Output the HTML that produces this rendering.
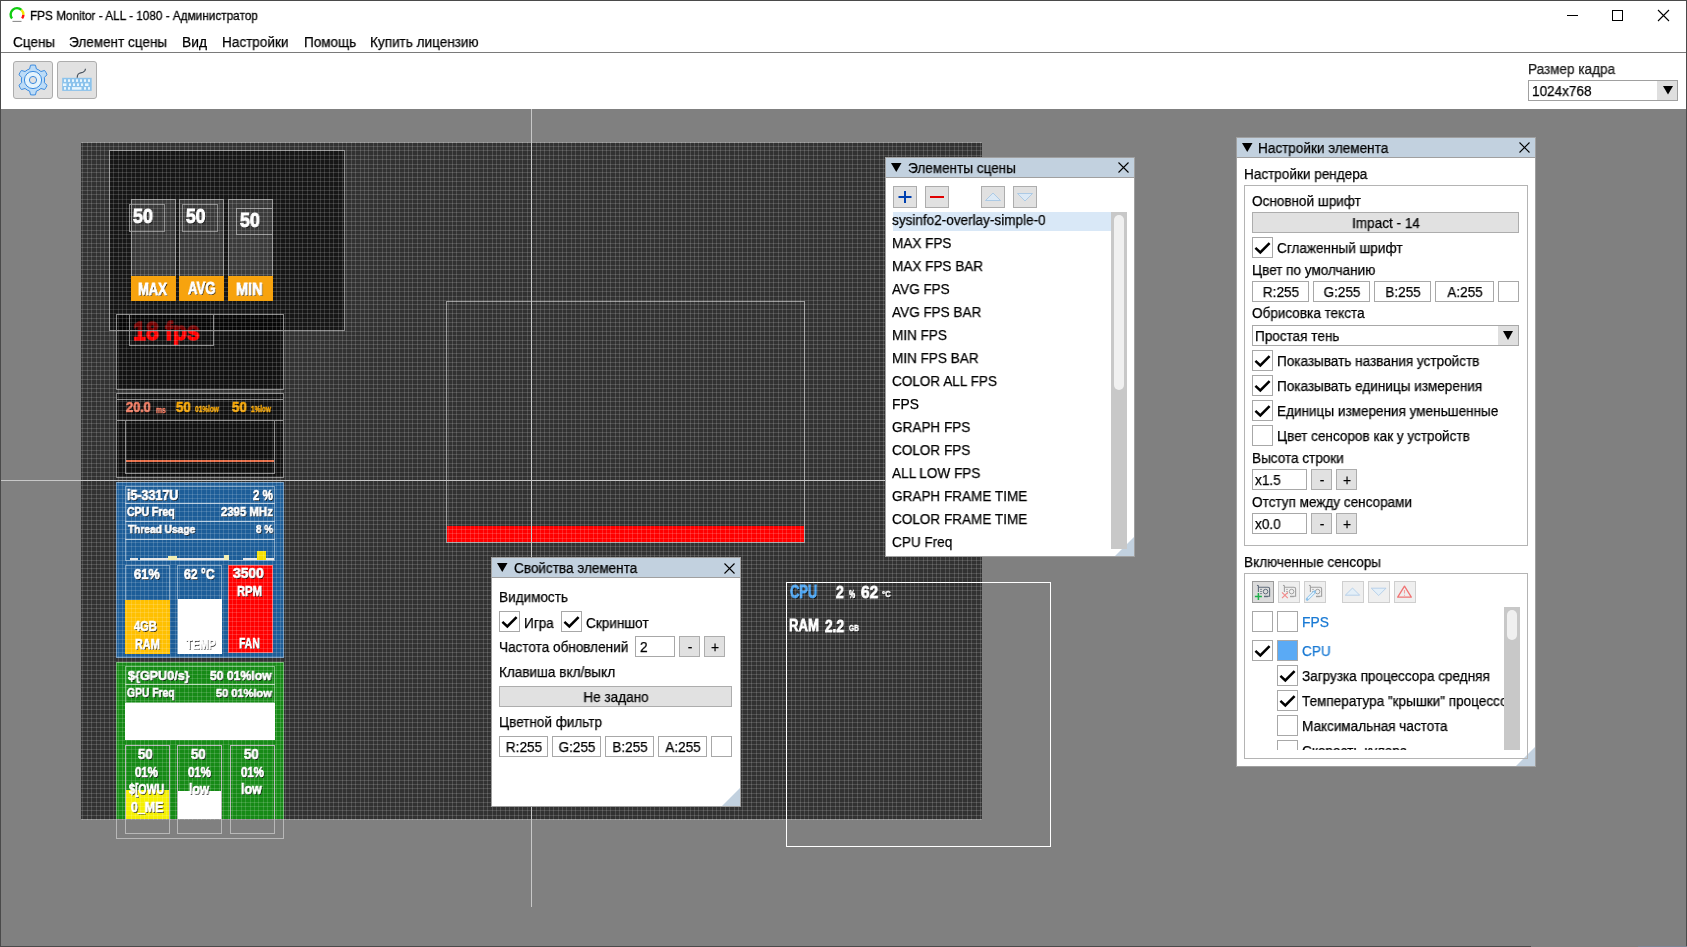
<!DOCTYPE html>
<html><head><meta charset="utf-8"><style>
html,body{margin:0;padding:0;}
body{width:1687px;height:947px;overflow:hidden;position:relative;background:#fff;font-family:"Liberation Sans", sans-serif;color:#000;}
.t{position:absolute;white-space:nowrap;line-height:1;will-change:transform;}
.imp{will-change:transform;}
.imp{font-weight:bold;transform-origin:0 0;-webkit-text-stroke:0.05em currentColor;}
div{box-sizing:border-box;}
svg{position:absolute;overflow:visible;}
</style></head><body>

<div style="position:absolute;left:0px;top:0px;width:1687px;height:109px;background:#fff;"></div>
<div class="t" style="left:30px;top:10.17px;font-size:12.8px;transform-origin:0 0;color:#000;transform:scaleX(0.92);transform-origin:0 0;-webkit-text-stroke:0.3px #000;">FPS Monitor - ALL - 1080 - Администратор</div>
<svg style="left:0px;top:0px" width="30" height="30" viewBox="0 0 30 30">
<path d="M12.03 18.53 A6.4 6.4 0 0 1 21.45 9.9" fill="none" stroke="#10cc10" stroke-width="2.4"/>
<path d="M21.45 9.9 A6.4 6.4 0 0 1 23.39 14.83" fill="none" stroke="#f0e800" stroke-width="2.4"/>
<path d="M23.39 14.83 A6.4 6.4 0 0 1 22.11 18.35" fill="none" stroke="#ff1010" stroke-width="2.4"/>
<rect x="12.5" y="20.9" width="9" height="0.9" fill="#777"/>
</svg>
<div style="position:absolute;left:1567px;top:15px;width:11px;height:1px;background:#000;"></div>
<div style="position:absolute;left:1612px;top:10px;width:11px;height:11px;border:1px solid #000;"></div>
<svg style="left:1657px;top:9px" width="13" height="13" viewBox="0 0 13 13">
<path d="M1 1 L12 12 M12 1 L1 12" stroke="#000" stroke-width="1.1"/></svg>
<div class="t" style="left:12.7px;top:35.92px;font-size:13.8px;transform-origin:0 0;transform:scaleX(0.9820);-webkit-text-stroke:0.25px currentColor;">Сцены</div>
<div class="t" style="left:69.4px;top:35.92px;font-size:13.8px;transform-origin:0 0;transform:scaleX(0.9820);-webkit-text-stroke:0.25px currentColor;">Элемент сцены</div>
<div class="t" style="left:182.39999999999998px;top:35.92px;font-size:13.8px;transform-origin:0 0;transform:scaleX(0.9820);-webkit-text-stroke:0.25px currentColor;">Вид</div>
<div class="t" style="left:222.39999999999998px;top:35.92px;font-size:13.8px;transform-origin:0 0;transform:scaleX(0.9820);-webkit-text-stroke:0.25px currentColor;">Настройки</div>
<div class="t" style="left:303.59999999999997px;top:35.92px;font-size:13.8px;transform-origin:0 0;transform:scaleX(0.9820);-webkit-text-stroke:0.25px currentColor;">Помощь</div>
<div class="t" style="left:370.3px;top:35.92px;font-size:13.8px;transform-origin:0 0;transform:scaleX(0.9820);-webkit-text-stroke:0.25px currentColor;">Купить лицензию</div>
<div style="position:absolute;left:0px;top:52px;width:1687px;height:1px;background:#7a7a7a;"></div>
<div style="position:absolute;left:13px;top:61px;width:40px;height:38px;background:#e1e1e1;border:1px solid #adadad;border-radius:3px;"></div>
<div style="position:absolute;left:57px;top:61px;width:40px;height:38px;background:#e1e1e1;border:1px solid #adadad;border-radius:3px;"></div>
<svg style="left:13px;top:61px" width="40" height="38" viewBox="0 0 40 38">
<path d="M16.61 7.91 L17.52 4.21 A15 15 0 0 1 22.48 4.21 L23.39 7.91 A11.6 11.6 0 0 1 27.91 10.52 L31.57 9.46 A15 15 0 0 1 34.05 13.75 L31.30 16.39 A11.6 11.6 0 0 1 31.30 21.61 L34.05 24.25 A15 15 0 0 1 31.57 28.54 L27.91 27.48 A11.6 11.6 0 0 1 23.39 30.09 L22.48 33.79 A15 15 0 0 1 17.52 33.79 L16.61 30.09 A11.6 11.6 0 0 1 12.09 27.48 L8.43 28.54 A15 15 0 0 1 5.95 24.25 L8.70 21.61 A11.6 11.6 0 0 1 8.70 16.39 L5.95 13.75 A15 15 0 0 1 8.43 9.46 L12.09 10.52 A11.6 11.6 0 0 1 16.61 7.91 Z" fill="#bddcf7" stroke="#3b8be0" stroke-width="1"/>
<circle cx="20" cy="19" r="8.6" fill="#e4f3fc" stroke="#3b8be0" stroke-width="1"/>
<circle cx="20" cy="19" r="3.6" fill="#e1e1e1" stroke="#3b8be0" stroke-width="1"/>
</svg>
<svg style="left:57px;top:61px" width="40" height="38" viewBox="0 0 40 38">
<rect x="5.2" y="16.8" width="29.5" height="13.1" fill="#8cc3ec"/>
<g fill="#e8f7fe"><rect x="7" y="18.3" width="2" height="2.6"/><rect x="11" y="18.3" width="2" height="2.6"/><rect x="15" y="18.3" width="2" height="2.6"/><rect x="19" y="18.3" width="2" height="2.6"/><rect x="23" y="18.3" width="2" height="2.6"/><rect x="27" y="18.3" width="2" height="2.6"/><rect x="31" y="18.3" width="2" height="2.6"/><rect x="6" y="22.4" width="3.5" height="2.6"/><rect x="12" y="22.4" width="2" height="2.6"/><rect x="16" y="22.4" width="2" height="2.6"/><rect x="20" y="22.4" width="2" height="2.6"/><rect x="24" y="22.4" width="2" height="2.6"/><rect x="28" y="22.4" width="3.5" height="2.6"/><rect x="7" y="26.1" width="2" height="2.6"/><rect x="11" y="26.1" width="2" height="2.6"/><rect x="15" y="26.1" width="9.5" height="2.6"/><rect x="27" y="26.1" width="2" height="2.6"/><rect x="31" y="26.1" width="2" height="2.6"/></g>
<path d="M20.2 16.8 C20.2 11 24 12 26 11.2 C28 10.4 28.5 9.5 28.5 7.8" fill="none" stroke="#4a5560" stroke-width="1.2"/>
</svg>
<div class="t" style="left:1527.6000000000001px;top:63.12px;font-size:13.8px;transform-origin:0 0;transform:scaleX(0.9820);-webkit-text-stroke:0.25px currentColor;color:#1a1a1a;">Размер кадра</div>
<div style="position:absolute;left:1528px;top:80px;width:150px;height:21px;background:#fff;border:1px solid #a0a0a0;"></div>
<div style="position:absolute;left:1657px;top:81px;width:20px;height:19px;background:#dfdfdf;"></div>
<div class="t" style="left:1531.9px;top:85.12px;font-size:13.8px;transform-origin:0 0;transform:scaleX(0.9820);-webkit-text-stroke:0.25px currentColor;">1024x768</div>
<svg style="left:1662.5px;top:86px" width="10" height="9"><path d="M0 0 L10 0 L5 8.6 Z" fill="#000"/></svg>
<div style="position:absolute;left:0px;top:109px;width:1687px;height:838px;background:#808080;"></div>
<div style="position:absolute;left:81px;top:143px;width:901px;height:676px;background:#323232;"></div>
<div style="position:absolute;left:116px;top:314px;width:168px;height:76px;background:#111;border:1px solid #8c8c8c;"></div>
<div style="position:absolute;left:129px;top:314px;width:85px;height:32px;border:1px solid #8c8c8c;"></div>
<div class="t imp" style="left:133.19px;top:319.05px;font-size:25.42px;transform:scaleX(0.909);color:#ff0000;">18 fps</div>
<div style="position:absolute;left:109px;top:150px;width:236px;height:181px;background:rgba(0,0,0,.55);border:1px solid #8c8c8c;"></div>
<div style="position:absolute;left:116px;top:314px;width:168px;height:76px;border:1px solid #8c8c8c;"></div>
<div style="position:absolute;left:129px;top:314px;width:85px;height:32px;border:1px solid #8c8c8c;"></div>
<div style="position:absolute;left:131px;top:199px;width:45px;height:102px;background:#3a3a3a;border:1px solid #8c8c8c;"></div>
<div style="position:absolute;left:179px;top:199px;width:45px;height:102px;background:#3a3a3a;border:1px solid #8c8c8c;"></div>
<div style="position:absolute;left:228px;top:199px;width:45px;height:102px;background:#3a3a3a;border:1px solid #8c8c8c;"></div>
<div style="position:absolute;left:129px;top:204px;width:36px;height:28px;border:1px solid #8c8c8c;"></div>
<div style="position:absolute;left:182px;top:204px;width:36px;height:28px;border:1px solid #8c8c8c;"></div>
<div style="position:absolute;left:236px;top:208px;width:37px;height:27px;border:1px solid #8c8c8c;"></div>
<div class="t imp" style="left:132.91px;top:207.35px;font-size:19.33px;transform:scaleX(0.930);color:#fff;text-shadow:1px 1px 0 rgba(0,0,0,.9);">50</div>
<div class="t imp" style="left:186.21px;top:207.35px;font-size:19.33px;transform:scaleX(0.902);color:#fff;text-shadow:1px 1px 0 rgba(0,0,0,.9);">50</div>
<div class="t imp" style="left:240.31px;top:210.95px;font-size:19.33px;transform:scaleX(0.925);color:#fff;text-shadow:1px 1px 0 rgba(0,0,0,.9);">50</div>
<div style="position:absolute;left:116px;top:393px;width:168px;height:85px;background:#111;border:1px solid #8c8c8c;"></div>
<div style="position:absolute;left:116px;top:399px;width:168px;height:22px;border:1px solid #8c8c8c;"></div>
<div style="position:absolute;left:125px;top:420px;width:150px;height:54px;border:1px solid #8c8c8c;"></div>
<div style="position:absolute;left:126px;top:460px;width:148px;height:2px;background:#e8704a;"></div>
<div class="t imp" style="left:125.87px;top:400.02px;font-size:14.67px;transform:scaleX(0.870);color:#f07a60;text-shadow:1px 1px 0 rgba(0,0,0,.9);">20.0</div>
<div class="t imp" style="left:155.63px;top:404.53px;font-size:9.49px;transform:scaleX(0.712);color:#f07a60;text-shadow:1px 1px 0 rgba(0,0,0,.9);">ms</div>
<div class="t imp" style="left:176.13px;top:400.02px;font-size:14.67px;transform:scaleX(0.901);color:#f5a500;text-shadow:1px 1px 0 rgba(0,0,0,.9);">50</div>
<div class="t imp" style="left:195.30px;top:405.15px;font-size:8.77px;transform:scaleX(0.743);color:#f5a500;text-shadow:1px 1px 0 rgba(0,0,0,.9);">01%low</div>
<div class="t imp" style="left:231.53px;top:400.02px;font-size:14.67px;transform:scaleX(0.901);color:#f5a500;text-shadow:1px 1px 0 rgba(0,0,0,.9);">50</div>
<div class="t imp" style="left:250.58px;top:405.15px;font-size:8.77px;transform:scaleX(0.727);color:#f5a500;text-shadow:1px 1px 0 rgba(0,0,0,.9);">1%low</div>
<div style="position:absolute;left:116px;top:482px;width:168px;height:176px;background:#1d5d98;border:1px solid rgba(255,255,255,.4);"></div>
<div style="position:absolute;left:125px;top:486px;width:150px;height:18px;border:1px solid rgba(255,255,255,.45);"></div>
<div style="position:absolute;left:125px;top:503px;width:150px;height:19px;border:1px solid rgba(255,255,255,.45);"></div>
<div style="position:absolute;left:125px;top:521px;width:150px;height:19px;border:1px solid rgba(255,255,255,.45);"></div>
<div style="position:absolute;left:125px;top:539px;width:150px;height:22px;border:1px solid rgba(255,255,255,.45);"></div>
<div class="t imp" style="left:127.04px;top:488.31px;font-size:14.45px;transform:scaleX(0.862);color:#fff;text-shadow:1px 1px 0 rgba(0,0,0,.9);">i5-3317U</div>
<div class="t imp" style="left:252.89px;top:487.89px;font-size:14.93px;transform:scaleX(0.769);color:#fff;text-shadow:1px 1px 0 rgba(0,0,0,.9);">2 %</div>
<div class="t imp" style="left:127.44px;top:506.23px;font-size:12.93px;transform:scaleX(0.808);color:#fff;text-shadow:1px 1px 0 rgba(0,0,0,.9);">CPU Freq</div>
<div class="t imp" style="left:220.89px;top:506.23px;font-size:12.93px;transform:scaleX(0.880);color:#fff;text-shadow:1px 1px 0 rgba(0,0,0,.9);">2395 MHz</div>
<div class="t imp" style="left:127.75px;top:523.83px;font-size:11.10px;transform:scaleX(0.915);color:#fff;text-shadow:1px 1px 0 rgba(0,0,0,.9);">Thread Usage</div>
<div class="t imp" style="left:255.55px;top:523.51px;font-size:11.47px;transform:scaleX(0.867);color:#fff;text-shadow:1px 1px 0 rgba(0,0,0,.9);">8 %</div>
<div style="position:absolute;left:130px;top:558px;width:8px;height:2px;background:#e8e8e8;"></div>
<div style="position:absolute;left:140px;top:558px;width:27px;height:2px;background:#e8e8e8;"></div>
<div style="position:absolute;left:167px;top:558px;width:10px;height:2px;background:#e8e8e8;"></div>
<div style="position:absolute;left:177px;top:558px;width:47px;height:2px;background:#e8e8e8;"></div>
<div style="position:absolute;left:224px;top:558px;width:5px;height:2px;background:#e8e8e8;"></div>
<div style="position:absolute;left:243px;top:558px;width:14px;height:2px;background:#e8e8e8;"></div>
<div style="position:absolute;left:257px;top:558px;width:9px;height:2px;background:#e8e8e8;"></div>
<div style="position:absolute;left:266px;top:558px;width:8px;height:2px;background:#e8e8e8;"></div>
<div style="position:absolute;left:167.6px;top:556px;width:9px;height:4px;background:#f2eeb0;"></div>
<div style="position:absolute;left:223.6px;top:555px;width:5px;height:5px;background:#f2eeb0;"></div>
<div style="position:absolute;left:257.2px;top:551px;width:9px;height:9px;background:#f5e000;"></div>
<div style="position:absolute;left:125px;top:565px;width:45px;height:89px;border:1px solid rgba(255,255,255,.45);"></div>
<div style="position:absolute;left:125px;top:600px;width:45px;height:54px;background:#ffc000;"></div>
<div style="position:absolute;left:177px;top:565px;width:45px;height:89px;border:1px solid rgba(255,255,255,.45);"></div>
<div style="position:absolute;left:178px;top:599px;width:44px;height:55px;background:#ffffff;"></div>
<div style="position:absolute;left:228px;top:565px;width:45px;height:88px;background:#ff0000;border:1px solid rgba(255,255,255,.4);"></div>
<div class="t imp" style="left:133.67px;top:567.00px;font-size:14.80px;transform:scaleX(0.869);color:#fff;text-shadow:1px 1px 0 rgba(0,0,0,.9);">61%</div>
<div class="t imp" style="left:184.18px;top:567.00px;font-size:14.80px;transform:scaleX(0.824);color:#fff;text-shadow:1px 1px 0 rgba(0,0,0,.9);">62 °C</div>
<div class="t imp" style="left:233.10px;top:565.90px;font-size:14.80px;transform:scaleX(0.932);color:#fff;text-shadow:1px 1px 0 rgba(0,0,0,.9);">3500</div>
<div class="t imp" style="left:237.05px;top:583.55px;font-size:14.86px;transform:scaleX(0.751);color:#fff;text-shadow:1px 1px 0 rgba(0,0,0,.9);">RPM</div>
<div class="t imp" style="left:133.91px;top:619.18px;font-size:14.13px;transform:scaleX(0.789);color:#fff;text-shadow:1px 1px 0 rgba(0,0,0,.9);">4GB</div>
<div class="t imp" style="left:134.57px;top:636.13px;font-size:15.00px;transform:scaleX(0.723);color:#fff;text-shadow:1px 1px 0 rgba(0,0,0,.9);">RAM</div>
<div class="t imp" style="left:185.56px;top:636.13px;font-size:15.00px;transform:scaleX(0.704);color:#fff;text-shadow:1px 1px 0 rgba(0,0,0,.9);">TEMP</div>
<div class="t imp" style="left:239.39px;top:635.03px;font-size:15.00px;transform:scaleX(0.691);color:#fff;text-shadow:1px 1px 0 rgba(0,0,0,.9);">FAN</div>
<div style="position:absolute;left:116px;top:662px;width:168px;height:157px;background:#168a16;border:1px solid rgba(255,255,255,.4);border-bottom:none;"></div>
<div style="position:absolute;left:125px;top:666px;width:150px;height:19px;border:1px solid rgba(255,255,255,.45);"></div>
<div style="position:absolute;left:125px;top:684px;width:150px;height:19px;border:1px solid rgba(255,255,255,.45);"></div>
<div style="position:absolute;left:125px;top:703px;width:150px;height:37px;background:#fff;"></div>
<div class="t imp" style="left:127.73px;top:669.41px;font-size:13.42px;transform:scaleX(0.939);color:#fff;text-shadow:1px 1px 0 rgba(0,0,0,.9);">${GPU0/s}</div>
<div class="t imp" style="left:210.24px;top:669.18px;font-size:13.68px;transform:scaleX(0.891);color:#fff;text-shadow:1px 1px 0 rgba(0,0,0,.9);">50 01%low</div>
<div class="t imp" style="left:127.45px;top:687.03px;font-size:12.13px;transform:scaleX(0.850);color:#fff;text-shadow:1px 1px 0 rgba(0,0,0,.9);">GPU Freq</div>
<div class="t imp" style="left:215.54px;top:687.37px;font-size:11.74px;transform:scaleX(0.941);color:#fff;text-shadow:1px 1px 0 rgba(0,0,0,.9);">50 01%low</div>
<div style="position:absolute;left:125px;top:790px;width:44px;height:29px;background:#f5f000;"></div>
<div style="position:absolute;left:178px;top:791px;width:44px;height:28px;background:#fff;"></div>
<div style="position:absolute;left:125px;top:745px;width:45px;height:89px;border:1px solid #b8b8b8;"></div>
<div style="position:absolute;left:177px;top:745px;width:45px;height:89px;border:1px solid #b8b8b8;"></div>
<div style="position:absolute;left:230px;top:745px;width:45px;height:89px;border:1px solid #b8b8b8;"></div>
<div class="t imp" style="left:138.23px;top:747.30px;font-size:14.00px;transform:scaleX(0.944);color:#fff;text-shadow:1px 1px 0 rgba(0,0,0,.9);">50</div>
<div class="t imp" style="left:135.33px;top:765.10px;font-size:14.00px;transform:scaleX(0.817);color:#fff;text-shadow:1px 1px 0 rgba(0,0,0,.9);">01%</div>
<div class="t imp" style="left:129.11px;top:782.30px;font-size:14.68px;transform:scaleX(0.721);color:#fff;text-shadow:1px 1px 0 rgba(0,0,0,.9);">$[OWU</div>
<div class="t imp" style="left:130.81px;top:800.00px;font-size:14.00px;transform:scaleX(0.884);color:#fff;text-shadow:1px 1px 0 rgba(0,0,0,.9);">0_ME</div>
<div class="t imp" style="left:190.93px;top:747.30px;font-size:14.00px;transform:scaleX(0.944);color:#fff;text-shadow:1px 1px 0 rgba(0,0,0,.9);">50</div>
<div class="t imp" style="left:188.03px;top:765.10px;font-size:14.00px;transform:scaleX(0.817);color:#fff;text-shadow:1px 1px 0 rgba(0,0,0,.9);">01%</div>
<div class="t imp" style="left:189.25px;top:782.06px;font-size:14.97px;transform:scaleX(0.810);color:#fff;text-shadow:1px 1px 0 rgba(0,0,0,.9);">low</div>
<div class="t imp" style="left:243.53px;top:747.30px;font-size:14.00px;transform:scaleX(0.944);color:#fff;text-shadow:1px 1px 0 rgba(0,0,0,.9);">50</div>
<div class="t imp" style="left:240.73px;top:765.10px;font-size:14.00px;transform:scaleX(0.817);color:#fff;text-shadow:1px 1px 0 rgba(0,0,0,.9);">01%</div>
<div class="t imp" style="left:241.44px;top:782.06px;font-size:14.97px;transform:scaleX(0.830);color:#fff;text-shadow:1px 1px 0 rgba(0,0,0,.9);">low</div>
<div style="position:absolute;left:116px;top:819px;width:168px;height:20px;background:#808080;"></div>
<div style="position:absolute;left:116px;top:819px;width:1px;height:20px;background:#b8b8b8;"></div>
<div style="position:absolute;left:283px;top:819px;width:1px;height:20px;background:#b8b8b8;"></div>
<div style="position:absolute;left:116px;top:838px;width:168px;height:1px;background:#b8b8b8;"></div>
<div style="position:absolute;left:125px;top:745px;width:45px;height:89px;border:1px solid #b8b8b8;"></div>
<div style="position:absolute;left:177px;top:745px;width:45px;height:89px;border:1px solid #b8b8b8;"></div>
<div style="position:absolute;left:230px;top:745px;width:45px;height:89px;border:1px solid #b8b8b8;"></div>
<div style="position:absolute;left:446px;top:301px;width:359px;height:242px;border:1px solid #9a9a9a;"></div>
<div style="position:absolute;left:447px;top:526px;width:357px;height:16px;background:#ff0000;"></div>
<div class="t imp" style="left:789.81px;top:584.08px;font-size:17.47px;transform:scaleX(0.739);color:#4aa3f0;text-shadow:1px 1px 0 rgba(0,0,0,.9);">CPU</div>
<div class="t imp" style="left:836.36px;top:584.43px;font-size:17.07px;transform:scaleX(0.829);color:#fff;text-shadow:1px 1px 0 rgba(0,0,0,.9);">2</div>
<div class="t imp" style="left:849.00px;top:590.18px;font-size:10.47px;transform:scaleX(0.644);color:#fff;text-shadow:1px 1px 0 rgba(0,0,0,.9);">%</div>
<div class="t imp" style="left:860.85px;top:584.43px;font-size:17.07px;transform:scaleX(0.907);color:#fff;text-shadow:1px 1px 0 rgba(0,0,0,.9);">62</div>
<div class="t imp" style="left:882.24px;top:590.37px;font-size:9.33px;transform:scaleX(0.838);color:#fff;text-shadow:1px 1px 0 rgba(0,0,0,.9);">°C</div>
<div class="t imp" style="left:789.48px;top:617.33px;font-size:17.30px;transform:scaleX(0.759);color:#fff;text-shadow:1px 1px 0 rgba(0,0,0,.9);">RAM</div>
<div class="t imp" style="left:825.06px;top:617.53px;font-size:17.07px;transform:scaleX(0.807);color:#fff;text-shadow:1px 1px 0 rgba(0,0,0,.9);">2.2</div>
<div class="t imp" style="left:849.20px;top:624.22px;font-size:8.93px;transform:scaleX(0.741);color:#fff;text-shadow:1px 1px 0 rgba(0,0,0,.9);">GB</div>
<svg style="left:81px;top:142px" width="901" height="678" shape-rendering="crispEdges">
<defs><pattern id="g" patternUnits="userSpaceOnUse" x="1" y="8" width="22" height="22">
<g fill="rgba(255,255,255,0.15)"><rect x="0" y="0" width="1" height="22"/><rect x="5" y="0" width="1" height="22"/><rect x="9" y="0" width="1" height="22"/><rect x="14" y="0" width="1" height="22"/><rect x="18" y="0" width="1" height="22"/><rect x="0" y="0" width="22" height="1"/><rect x="0" y="5" width="22" height="1"/><rect x="0" y="9" width="22" height="1"/><rect x="0" y="14" width="22" height="1"/><rect x="0" y="18" width="22" height="1"/></g></pattern></defs>
<rect x="0" y="0" width="901" height="678" fill="url(#g)"/></svg>
<div style="position:absolute;left:131px;top:276px;width:45px;height:25px;background:#f7a30e;"></div>
<div style="position:absolute;left:179px;top:276px;width:45px;height:25px;background:#f7a30e;"></div>
<div style="position:absolute;left:228px;top:276px;width:45px;height:25px;background:#f7a30e;"></div>
<div class="t imp" style="left:138.18px;top:280.64px;font-size:17.16px;transform:scaleX(0.757);color:#fff;text-shadow:1px 1px 0 rgba(0,0,0,.9);">MAX</div>
<div class="t imp" style="left:187.90px;top:280.84px;font-size:16.93px;transform:scaleX(0.779);color:#fff;text-shadow:1px 1px 0 rgba(0,0,0,.9);">AVG</div>
<div class="t imp" style="left:236.42px;top:280.64px;font-size:17.16px;transform:scaleX(0.849);color:#fff;text-shadow:1px 1px 0 rgba(0,0,0,.9);">MIN</div>
<div style="position:absolute;left:786px;top:582px;width:265px;height:265px;border:1px solid #ffffff;"></div>
<div style="position:absolute;left:531px;top:109px;width:1px;height:798px;background:#c8c8c8;"></div>
<div style="position:absolute;left:1px;top:480px;width:884px;height:1px;background:#c8c8c8;"></div>
<div style="position:absolute;left:885px;top:157px;width:250px;height:400px;background:#fff;border:1px solid #a0a0a0;"></div>
<svg style="left:1115px;top:537px" width="19" height="19"><path d="M19 0 L19 19 L0 19 Z" fill="#c2d1df"/></svg>
<div style="position:absolute;left:886px;top:158px;width:248px;height:20px;background:#c2d1df;border-bottom:1px solid #a0a0a0;"></div>
<svg style="left:891.2px;top:162.8px" width="10.5" height="9"><path d="M0 0 L10.5 0 L5.25 9 Z" fill="#000"/></svg>
<div class="t" style="left:907.7px;top:161.92px;font-size:13.8px;transform-origin:0 0;transform:scaleX(0.9820);-webkit-text-stroke:0.25px currentColor;">Элементы сцены</div>
<svg style="left:1118px;top:162px" width="11" height="11"><path d="M0.5 0.5 L10.5 10.5 M10.5 0.5 L0.5 10.5" stroke="#000" stroke-width="1.1" fill="none"/></svg>
<div style="position:absolute;left:893px;top:186px;width:24px;height:22px;background:#e1e1e1;border:1px solid #adadad;"></div>
<svg style="left:893px;top:186px" width="24" height="22"><path d="M12 5 V17 M5.5 11 H18.5" stroke="#0040b0" stroke-width="2" fill="none"/></svg>
<div style="position:absolute;left:925px;top:186px;width:24px;height:22px;background:#e1e1e1;border:1px solid #adadad;"></div>
<svg style="left:925px;top:186px" width="24" height="22"><path d="M5 11 H19" stroke="#e00000" stroke-width="2" fill="none"/></svg>
<div style="position:absolute;left:981px;top:186px;width:24px;height:22px;background:#e1e1e1;border:1px solid #adadad;"></div>
<svg style="left:981px;top:186px" width="24" height="22"><path d="M4.5 14.5 L12 7 L19.5 14.5 Z" fill="#dce9f5" stroke="#9fc3e3" stroke-width="0.8"/></svg>
<div style="position:absolute;left:1013px;top:186px;width:24px;height:22px;background:#e1e1e1;border:1px solid #adadad;"></div>
<svg style="left:1013px;top:186px" width="24" height="22"><path d="M4.5 7.5 L12 15 L19.5 7.5 Z" fill="#dce9f5" stroke="#9fc3e3" stroke-width="0.8"/></svg>
<div style="position:absolute;left:893px;top:212px;width:218px;height:19px;background:#d9e8f7;"></div>
<div class="t" style="left:892.4000000000001px;top:214.12px;font-size:13.8px;transform-origin:0 0;transform:scaleX(0.9820);-webkit-text-stroke:0.25px currentColor;">sysinfo2-overlay-simple-0</div>
<div class="t" style="left:892.4000000000001px;top:237.12px;font-size:13.8px;transform-origin:0 0;transform:scaleX(0.9820);-webkit-text-stroke:0.25px currentColor;">MAX FPS</div>
<div class="t" style="left:892.4000000000001px;top:260.12px;font-size:13.8px;transform-origin:0 0;transform:scaleX(0.9820);-webkit-text-stroke:0.25px currentColor;">MAX FPS BAR</div>
<div class="t" style="left:892.4000000000001px;top:283.12px;font-size:13.8px;transform-origin:0 0;transform:scaleX(0.9820);-webkit-text-stroke:0.25px currentColor;">AVG FPS</div>
<div class="t" style="left:892.4000000000001px;top:306.12px;font-size:13.8px;transform-origin:0 0;transform:scaleX(0.9820);-webkit-text-stroke:0.25px currentColor;">AVG FPS BAR</div>
<div class="t" style="left:892.4000000000001px;top:329.12px;font-size:13.8px;transform-origin:0 0;transform:scaleX(0.9820);-webkit-text-stroke:0.25px currentColor;">MIN FPS</div>
<div class="t" style="left:892.4000000000001px;top:352.12px;font-size:13.8px;transform-origin:0 0;transform:scaleX(0.9820);-webkit-text-stroke:0.25px currentColor;">MIN FPS BAR</div>
<div class="t" style="left:892.4000000000001px;top:375.12px;font-size:13.8px;transform-origin:0 0;transform:scaleX(0.9820);-webkit-text-stroke:0.25px currentColor;">COLOR ALL FPS</div>
<div class="t" style="left:892.4000000000001px;top:398.12px;font-size:13.8px;transform-origin:0 0;transform:scaleX(0.9820);-webkit-text-stroke:0.25px currentColor;">FPS</div>
<div class="t" style="left:892.4000000000001px;top:421.12px;font-size:13.8px;transform-origin:0 0;transform:scaleX(0.9820);-webkit-text-stroke:0.25px currentColor;">GRAPH FPS</div>
<div class="t" style="left:892.4000000000001px;top:444.12px;font-size:13.8px;transform-origin:0 0;transform:scaleX(0.9820);-webkit-text-stroke:0.25px currentColor;">COLOR FPS</div>
<div class="t" style="left:892.4000000000001px;top:467.12px;font-size:13.8px;transform-origin:0 0;transform:scaleX(0.9820);-webkit-text-stroke:0.25px currentColor;">ALL LOW FPS</div>
<div class="t" style="left:892.4000000000001px;top:490.12px;font-size:13.8px;transform-origin:0 0;transform:scaleX(0.9820);-webkit-text-stroke:0.25px currentColor;">GRAPH FRAME TIME</div>
<div class="t" style="left:892.4000000000001px;top:513.12px;font-size:13.8px;transform-origin:0 0;transform:scaleX(0.9820);-webkit-text-stroke:0.25px currentColor;">COLOR FRAME TIME</div>
<div class="t" style="left:892.4000000000001px;top:536.12px;font-size:13.8px;transform-origin:0 0;transform:scaleX(0.9820);-webkit-text-stroke:0.25px currentColor;">CPU Freq</div>
<div style="position:absolute;left:1111px;top:212px;width:16px;height:337px;background:#c8c8c8;"></div>
<div style="position:absolute;left:1114px;top:215px;width:10px;height:175px;background:#f0f0f0;border-radius:5px;"></div>
<div style="position:absolute;left:491px;top:557px;width:250px;height:250px;background:#fff;border:1px solid #a0a0a0;"></div>
<svg style="left:722px;top:788px" width="18" height="18"><path d="M18 0 L18 18 L0 18 Z" fill="#c2d1df"/></svg>
<div style="position:absolute;left:492px;top:558px;width:248px;height:20px;background:#c2d1df;border-bottom:1px solid #a0a0a0;"></div>
<svg style="left:497.3px;top:563px" width="10.5" height="9"><path d="M0 0 L10.5 0 L5.25 9 Z" fill="#000"/></svg>
<div class="t" style="left:513.9000000000001px;top:561.62px;font-size:13.8px;transform-origin:0 0;transform:scaleX(0.9820);-webkit-text-stroke:0.25px currentColor;">Свойства элемента</div>
<svg style="left:724px;top:563px" width="11" height="11"><path d="M0.5 0.5 L10.5 10.5 M10.5 0.5 L0.5 10.5" stroke="#000" stroke-width="1.1" fill="none"/></svg>
<div class="t" style="left:498.5px;top:591.32px;font-size:13.8px;transform-origin:0 0;transform:scaleX(0.9820);-webkit-text-stroke:0.25px currentColor;">Видимость</div>
<div style="position:absolute;left:499px;top:611px;width:21px;height:21px;background:#fff;border:1px solid #a8a8a8;"></div>
<svg style="left:499px;top:611px" width="21" height="21"><path d="M3.4 10.9 L8.3 15.5 L17.6 6.2" stroke="#000" stroke-width="2.5" fill="none"/></svg>
<div class="t" style="left:523.5px;top:616.52px;font-size:13.8px;transform-origin:0 0;transform:scaleX(0.9820);-webkit-text-stroke:0.25px currentColor;">Игра</div>
<div style="position:absolute;left:561px;top:611px;width:21px;height:21px;background:#fff;border:1px solid #a8a8a8;"></div>
<svg style="left:561px;top:611px" width="21" height="21"><path d="M3.4 10.9 L8.3 15.5 L17.6 6.2" stroke="#000" stroke-width="2.5" fill="none"/></svg>
<div class="t" style="left:585.8000000000001px;top:616.52px;font-size:13.8px;transform-origin:0 0;transform:scaleX(0.9820);-webkit-text-stroke:0.25px currentColor;">Скриншот</div>
<div class="t" style="left:498.5px;top:640.72px;font-size:13.8px;transform-origin:0 0;transform:scaleX(0.9820);-webkit-text-stroke:0.25px currentColor;">Частота обновлений</div>
<div style="position:absolute;left:635px;top:636px;width:40px;height:21px;background:#fff;border:1px solid #a8a8a8;"></div>
<div class="t" style="left:639.7px;top:640.72px;font-size:13.8px;transform-origin:0 0;transform:scaleX(0.9820);-webkit-text-stroke:0.25px currentColor;">2</div>
<div style="position:absolute;left:679px;top:636px;width:21px;height:21px;background:#e1e1e1;border:1px solid #adadad;"></div>
<div class="t" style="left:389.5px;width:600px;text-align:center;top:640.72px;font-size:13.8px;transform-origin:50% 0;transform:scaleX(0.9820);-webkit-text-stroke:0.25px currentColor;">-</div>
<div style="position:absolute;left:704px;top:636px;width:21px;height:21px;background:#e1e1e1;border:1px solid #adadad;"></div>
<div class="t" style="left:414.5px;width:600px;text-align:center;top:640.72px;font-size:13.8px;transform-origin:50% 0;transform:scaleX(0.9820);-webkit-text-stroke:0.25px currentColor;">+</div>
<div class="t" style="left:498.5px;top:666.02px;font-size:13.8px;transform-origin:0 0;transform:scaleX(0.9820);-webkit-text-stroke:0.25px currentColor;">Клавиша вкл/выкл</div>
<div style="position:absolute;left:499px;top:686px;width:233px;height:21px;background:#e1e1e1;border:1px solid #adadad;"></div>
<div class="t" style="left:315.5px;width:600px;text-align:center;top:690.62px;font-size:13.8px;transform-origin:50% 0;transform:scaleX(0.9820);-webkit-text-stroke:0.25px currentColor;">Не задано</div>
<div class="t" style="left:498.5px;top:716.12px;font-size:13.8px;transform-origin:0 0;transform:scaleX(0.9820);-webkit-text-stroke:0.25px currentColor;">Цветной фильтр</div>
<div style="position:absolute;left:499px;top:736px;width:49px;height:21px;background:#fff;border:1px solid #a8a8a8;"></div>
<div class="t" style="left:223.5px;width:600px;text-align:center;top:740.62px;font-size:13.8px;transform-origin:50% 0;transform:scaleX(0.9820);-webkit-text-stroke:0.25px currentColor;">R:255</div>
<div style="position:absolute;left:552px;top:736px;width:49px;height:21px;background:#fff;border:1px solid #a8a8a8;"></div>
<div class="t" style="left:276.5px;width:600px;text-align:center;top:740.62px;font-size:13.8px;transform-origin:50% 0;transform:scaleX(0.9820);-webkit-text-stroke:0.25px currentColor;">G:255</div>
<div style="position:absolute;left:605px;top:736px;width:49px;height:21px;background:#fff;border:1px solid #a8a8a8;"></div>
<div class="t" style="left:329.5px;width:600px;text-align:center;top:740.62px;font-size:13.8px;transform-origin:50% 0;transform:scaleX(0.9820);-webkit-text-stroke:0.25px currentColor;">B:255</div>
<div style="position:absolute;left:658px;top:736px;width:49px;height:21px;background:#fff;border:1px solid #a8a8a8;"></div>
<div class="t" style="left:382.5px;width:600px;text-align:center;top:740.62px;font-size:13.8px;transform-origin:50% 0;transform:scaleX(0.9820);-webkit-text-stroke:0.25px currentColor;">A:255</div>
<div style="position:absolute;left:711px;top:736px;width:21px;height:21px;background:#fff;border:1px solid #a8a8a8;"></div>
<div style="position:absolute;left:1236px;top:137px;width:300px;height:630px;background:#fff;border:1px solid #a0a0a0;"></div>
<svg style="left:1516px;top:747px" width="19" height="19"><path d="M19 0 L19 19 L0 19 Z" fill="#c2d1df"/></svg>
<div style="position:absolute;left:1237px;top:138px;width:298px;height:20px;background:#c2d1df;border-bottom:1px solid #a0a0a0;"></div>
<svg style="left:1242.3px;top:143px" width="10.5" height="9"><path d="M0 0 L10.5 0 L5.25 9 Z" fill="#000"/></svg>
<div class="t" style="left:1258.2px;top:142.32px;font-size:13.8px;transform-origin:0 0;transform:scaleX(0.9820);-webkit-text-stroke:0.25px currentColor;">Настройки элемента</div>
<svg style="left:1519px;top:142px" width="11" height="11"><path d="M0.5 0.5 L10.5 10.5 M10.5 0.5 L0.5 10.5" stroke="#000" stroke-width="1.1" fill="none"/></svg>
<div class="t" style="left:1243.6000000000001px;top:167.92px;font-size:13.8px;transform-origin:0 0;transform:scaleX(0.9820);-webkit-text-stroke:0.25px currentColor;">Настройки рендера</div>
<div style="position:absolute;left:1244px;top:185px;width:284px;height:361px;border:1px solid #b4b4b4;"></div>
<div class="t" style="left:1251.5px;top:195.12px;font-size:13.8px;transform-origin:0 0;transform:scaleX(0.9820);-webkit-text-stroke:0.25px currentColor;">Основной шрифт</div>
<div style="position:absolute;left:1252px;top:212px;width:267px;height:21px;background:#e1e1e1;border:1px solid #adadad;"></div>
<div class="t" style="left:1085.5px;width:600px;text-align:center;top:216.72px;font-size:13.8px;transform-origin:50% 0;transform:scaleX(0.9820);-webkit-text-stroke:0.25px currentColor;">Impact - 14</div>
<div style="position:absolute;left:1252px;top:237px;width:21px;height:21px;background:#fff;border:1px solid #a8a8a8;"></div>
<svg style="left:1252px;top:237px" width="21" height="21"><path d="M3.4 10.9 L8.3 15.5 L17.6 6.2" stroke="#000" stroke-width="2.5" fill="none"/></svg>
<div class="t" style="left:1276.8px;top:241.82px;font-size:13.8px;transform-origin:0 0;transform:scaleX(0.9820);-webkit-text-stroke:0.25px currentColor;">Сглаженный шрифт</div>
<div class="t" style="left:1251.5px;top:264.32px;font-size:13.8px;transform-origin:0 0;transform:scaleX(0.9820);-webkit-text-stroke:0.25px currentColor;">Цвет по умолчанию</div>
<div style="position:absolute;left:1252px;top:281px;width:57px;height:21px;background:#fff;border:1px solid #a8a8a8;"></div>
<div class="t" style="left:980.5px;width:600px;text-align:center;top:285.82px;font-size:13.8px;transform-origin:50% 0;transform:scaleX(0.9820);-webkit-text-stroke:0.25px currentColor;">R:255</div>
<div style="position:absolute;left:1313px;top:281px;width:57px;height:21px;background:#fff;border:1px solid #a8a8a8;"></div>
<div class="t" style="left:1041.5px;width:600px;text-align:center;top:285.82px;font-size:13.8px;transform-origin:50% 0;transform:scaleX(0.9820);-webkit-text-stroke:0.25px currentColor;">G:255</div>
<div style="position:absolute;left:1374px;top:281px;width:57px;height:21px;background:#fff;border:1px solid #a8a8a8;"></div>
<div class="t" style="left:1102.5px;width:600px;text-align:center;top:285.82px;font-size:13.8px;transform-origin:50% 0;transform:scaleX(0.9820);-webkit-text-stroke:0.25px currentColor;">B:255</div>
<div style="position:absolute;left:1435px;top:281px;width:59px;height:21px;background:#fff;border:1px solid #a8a8a8;"></div>
<div class="t" style="left:1164.5px;width:600px;text-align:center;top:285.82px;font-size:13.8px;transform-origin:50% 0;transform:scaleX(0.9820);-webkit-text-stroke:0.25px currentColor;">A:255</div>
<div style="position:absolute;left:1498px;top:281px;width:21px;height:21px;background:#fff;border:1px solid #a8a8a8;"></div>
<div class="t" style="left:1251.5px;top:307.32px;font-size:13.8px;transform-origin:0 0;transform:scaleX(0.9820);-webkit-text-stroke:0.25px currentColor;">Обрисовка текста</div>
<div style="position:absolute;left:1252px;top:325px;width:267px;height:21px;background:#fff;border:1px solid #a8a8a8;"></div>
<div class="t" style="left:1255.2px;top:329.82px;font-size:13.8px;transform-origin:0 0;transform:scaleX(0.9820);-webkit-text-stroke:0.25px currentColor;">Простая тень</div>
<div style="position:absolute;left:1498px;top:326px;width:20px;height:19px;background:#dfdfdf;"></div>
<svg style="left:1503px;top:331px" width="10" height="9"><path d="M0 0 L10 0 L5.0 9 Z" fill="#000"/></svg>
<div style="position:absolute;left:1252px;top:350px;width:21px;height:21px;background:#fff;border:1px solid #a8a8a8;"></div>
<svg style="left:1252px;top:350px" width="21" height="21"><path d="M3.4 10.9 L8.3 15.5 L17.6 6.2" stroke="#000" stroke-width="2.5" fill="none"/></svg>
<div class="t" style="left:1276.8px;top:354.82px;font-size:13.8px;transform-origin:0 0;transform:scaleX(0.9820);-webkit-text-stroke:0.25px currentColor;">Показывать названия устройств</div>
<div style="position:absolute;left:1252px;top:375px;width:21px;height:21px;background:#fff;border:1px solid #a8a8a8;"></div>
<svg style="left:1252px;top:375px" width="21" height="21"><path d="M3.4 10.9 L8.3 15.5 L17.6 6.2" stroke="#000" stroke-width="2.5" fill="none"/></svg>
<div class="t" style="left:1276.8px;top:379.82px;font-size:13.8px;transform-origin:0 0;transform:scaleX(0.9820);-webkit-text-stroke:0.25px currentColor;">Показывать единицы измерения</div>
<div style="position:absolute;left:1252px;top:400px;width:21px;height:21px;background:#fff;border:1px solid #a8a8a8;"></div>
<svg style="left:1252px;top:400px" width="21" height="21"><path d="M3.4 10.9 L8.3 15.5 L17.6 6.2" stroke="#000" stroke-width="2.5" fill="none"/></svg>
<div class="t" style="left:1276.8px;top:404.82px;font-size:13.8px;transform-origin:0 0;transform:scaleX(0.9820);-webkit-text-stroke:0.25px currentColor;">Единицы измерения уменьшенные</div>
<div style="position:absolute;left:1252px;top:425px;width:21px;height:21px;background:#fff;border:1px solid #a8a8a8;"></div>
<div class="t" style="left:1276.8px;top:429.82px;font-size:13.8px;transform-origin:0 0;transform:scaleX(0.9820);-webkit-text-stroke:0.25px currentColor;">Цвет сенсоров как у устройств</div>
<div class="t" style="left:1251.5px;top:451.82px;font-size:13.8px;transform-origin:0 0;transform:scaleX(0.9820);-webkit-text-stroke:0.25px currentColor;">Высота строки</div>
<div style="position:absolute;left:1252px;top:469px;width:55px;height:21px;background:#fff;border:1px solid #a8a8a8;"></div>
<div class="t" style="left:1255.2px;top:473.72px;font-size:13.8px;transform-origin:0 0;transform:scaleX(0.9820);-webkit-text-stroke:0.25px currentColor;">x1.5</div>
<div style="position:absolute;left:1311px;top:469px;width:21px;height:21px;background:#e1e1e1;border:1px solid #adadad;"></div>
<div class="t" style="left:1021.5px;width:600px;text-align:center;top:473.72px;font-size:13.8px;transform-origin:50% 0;transform:scaleX(0.9820);-webkit-text-stroke:0.25px currentColor;">-</div>
<div style="position:absolute;left:1336px;top:469px;width:21px;height:21px;background:#e1e1e1;border:1px solid #adadad;"></div>
<div class="t" style="left:1046.5px;width:600px;text-align:center;top:473.72px;font-size:13.8px;transform-origin:50% 0;transform:scaleX(0.9820);-webkit-text-stroke:0.25px currentColor;">+</div>
<div class="t" style="left:1251.5px;top:496.02px;font-size:13.8px;transform-origin:0 0;transform:scaleX(0.9820);-webkit-text-stroke:0.25px currentColor;">Отступ между сенсорами</div>
<div style="position:absolute;left:1252px;top:513px;width:55px;height:21px;background:#fff;border:1px solid #a8a8a8;"></div>
<div class="t" style="left:1255.2px;top:517.72px;font-size:13.8px;transform-origin:0 0;transform:scaleX(0.9820);-webkit-text-stroke:0.25px currentColor;">x0.0</div>
<div style="position:absolute;left:1311px;top:513px;width:21px;height:21px;background:#e1e1e1;border:1px solid #adadad;"></div>
<div class="t" style="left:1021.5px;width:600px;text-align:center;top:517.72px;font-size:13.8px;transform-origin:50% 0;transform:scaleX(0.9820);-webkit-text-stroke:0.25px currentColor;">-</div>
<div style="position:absolute;left:1336px;top:513px;width:21px;height:21px;background:#e1e1e1;border:1px solid #adadad;"></div>
<div class="t" style="left:1046.5px;width:600px;text-align:center;top:517.72px;font-size:13.8px;transform-origin:50% 0;transform:scaleX(0.9820);-webkit-text-stroke:0.25px currentColor;">+</div>
<div class="t" style="left:1243.6000000000001px;top:555.82px;font-size:13.8px;transform-origin:0 0;transform:scaleX(0.9820);-webkit-text-stroke:0.25px currentColor;">Включенные сенсоры</div>
<div style="position:absolute;left:1244px;top:573px;width:284px;height:186px;border:1px solid #b4b4b4;"></div>
<div style="position:absolute;left:1252px;top:581px;width:22px;height:22px;background:#dcdcdc;border:1px solid #9a9a9a;"></div>
<div style="position:absolute;left:1278px;top:581px;width:22px;height:22px;background:#efefef;border:1px solid #cfcfcf;"></div>
<div style="position:absolute;left:1304px;top:581px;width:22px;height:22px;background:#efefef;border:1px solid #cfcfcf;"></div>
<div style="position:absolute;left:1342px;top:581px;width:22px;height:22px;background:#efefef;border:1px solid #cfcfcf;"></div>
<div style="position:absolute;left:1368px;top:581px;width:22px;height:22px;background:#efefef;border:1px solid #cfcfcf;"></div>
<div style="position:absolute;left:1394px;top:581px;width:22px;height:22px;background:#efefef;border:1px solid #cfcfcf;"></div>
<svg style="left:1252px;top:581px" width="22" height="22"><path d="M5 4.3 L6.4 4.8 L6.4 11" fill="none" stroke="#5f6b7a" stroke-width="1.1"/>
<path d="M6.4 6.2 H16 Q17.6 6.2 17.6 7.8 V15.2 H12" fill="none" stroke="#5f6b7a" stroke-width="1.1"/>
<circle cx="13.6" cy="10.6" r="2.3" fill="none" stroke="#5f6b7a" stroke-width="1"/>
<path d="M8.2 8.4 H9.8 M8.2 10.5 H9.8 M8.2 12.6 H9.8" stroke="#5f6b7a" stroke-width="0.9"/>
<rect x="12" y="15" width="3.8" height="1.2" fill="#5f6b7a"/><path d="M6.4 11.9 V18.9 M2.9 15.4 H9.9" stroke="#1fb04a" stroke-width="1.5"/></svg>
<svg style="left:1278px;top:581px" width="22" height="22"><path d="M5 4.3 L6.4 4.8 L6.4 11" fill="none" stroke="#a0a0a0" stroke-width="1.1"/>
<path d="M6.4 6.2 H16 Q17.6 6.2 17.6 7.8 V15.2 H12" fill="none" stroke="#a0a0a0" stroke-width="1.1"/>
<circle cx="13.6" cy="10.6" r="2.3" fill="none" stroke="#a0a0a0" stroke-width="1"/>
<path d="M8.2 8.4 H9.8 M8.2 10.5 H9.8 M8.2 12.6 H9.8" stroke="#a0a0a0" stroke-width="0.9"/>
<rect x="12" y="15" width="3.8" height="1.2" fill="#a0a0a0"/><path d="M4 11.3 L9.8 17.1 M9.8 11.3 L4 17.1" stroke="#f28c8c" stroke-width="1.2"/></svg>
<svg style="left:1304px;top:581px" width="22" height="22"><path d="M5 4.3 L6.4 4.8 L6.4 11" fill="none" stroke="#a0a0a0" stroke-width="1.1"/>
<path d="M6.4 6.2 H16 Q17.6 6.2 17.6 7.8 V15.2 H12" fill="none" stroke="#a0a0a0" stroke-width="1.1"/>
<circle cx="13.6" cy="10.6" r="2.3" fill="none" stroke="#a0a0a0" stroke-width="1"/>
<path d="M8.2 8.4 H9.8 M8.2 10.5 H9.8 M8.2 12.6 H9.8" stroke="#a0a0a0" stroke-width="0.9"/>
<rect x="12" y="15" width="3.8" height="1.2" fill="#a0a0a0"/><path d="M3.2 18.3 L10.6 10.9" stroke="#8fc3ea" stroke-width="3" stroke-linecap="round"/><path d="M4 17.5 L10 11.5" stroke="#eef7fd" stroke-width="1.4"/></svg>
<svg style="left:1342px;top:581px" width="22" height="22"><path d="M3.3 14.2 L10.5 7 L17.7 14.2 Z" fill="#e4eff8" stroke="#aac8e6" stroke-width="0.8"/></svg>
<svg style="left:1368px;top:581px" width="22" height="22"><path d="M3.3 7.2 L18 7.2 L10.7 14.5 Z" fill="#e4eff8" stroke="#aac8e6" stroke-width="0.8"/></svg>
<svg style="left:1394px;top:581px" width="22" height="22"><path d="M10.5 5.2 L17.3 16.2 L3.7 16.2 Z" fill="none" stroke="#f07474" stroke-width="1.3" stroke-linejoin="round"/><path d="M10.5 9 V12.6 M10.5 13.8 V14.8" stroke="#f4a0a0" stroke-width="1.1"/></svg>
<div style="position:absolute;left:1504px;top:607px;width:16px;height:143px;background:#c8c8c8;"></div>
<div style="position:absolute;left:1507px;top:610px;width:10px;height:30px;background:#f0f0f0;border-radius:5px;"></div>
<div style="position:absolute;left:1252px;top:611px;width:21px;height:21px;background:#fff;border:1px solid #a8a8a8;"></div>
<div style="position:absolute;left:1277px;top:611px;width:21px;height:21px;background:#fff;border:1px solid #a8a8a8;"></div>
<div class="t" style="left:1301.7px;top:615.82px;font-size:13.8px;transform-origin:0 0;transform:scaleX(0.9820);-webkit-text-stroke:0.25px currentColor;color:#1a7ad4;">FPS</div>
<div style="position:absolute;left:1252px;top:640px;width:21px;height:21px;background:#fff;border:1px solid #a8a8a8;"></div>
<svg style="left:1252px;top:640px" width="21" height="21"><path d="M3.4 10.9 L8.3 15.5 L17.6 6.2" stroke="#000" stroke-width="2.5" fill="none"/></svg>
<div style="position:absolute;left:1277px;top:640px;width:21px;height:21px;background:#5aaaf5;border:1px solid #a8a8a8;"></div>
<div class="t" style="left:1301.7px;top:644.82px;font-size:13.8px;transform-origin:0 0;transform:scaleX(0.9820);-webkit-text-stroke:0.25px currentColor;color:#1a7ad4;">CPU</div>
<div style="position:absolute;left:1277px;top:665px;width:227px;height:85px;overflow:hidden;">
<div style="position:absolute;left:0;top:0px;width:21px;height:21px;background:#fff;border:1px solid #a8a8a8;"></div>
<svg style="left:0;top:0px" width="21" height="20"><path d="M3.4 10.9 L8.3 15.5 L17.6 6.2" stroke="#000" stroke-width="2.5" fill="none"/></svg>
<div class="t" style="left:24.7px;top:4.82px;font-size:13.8px;-webkit-text-stroke:0.25px currentColor;transform-origin:0 0;transform:scaleX(0.982);">Загрузка процессора средняя</div>
<div style="position:absolute;left:0;top:25px;width:21px;height:21px;background:#fff;border:1px solid #a8a8a8;"></div>
<svg style="left:0;top:25px" width="21" height="20"><path d="M3.4 10.9 L8.3 15.5 L17.6 6.2" stroke="#000" stroke-width="2.5" fill="none"/></svg>
<div class="t" style="left:24.7px;top:29.82px;font-size:13.8px;-webkit-text-stroke:0.25px currentColor;transform-origin:0 0;transform:scaleX(0.982);">Температура "крышки" процессора</div>
<div style="position:absolute;left:0;top:50px;width:21px;height:21px;background:#fff;border:1px solid #a8a8a8;"></div>
<div class="t" style="left:24.7px;top:54.82px;font-size:13.8px;-webkit-text-stroke:0.25px currentColor;transform-origin:0 0;transform:scaleX(0.982);">Максимальная частота</div>
<div style="position:absolute;left:0;top:75px;width:21px;height:21px;background:#fff;border:1px solid #a8a8a8;"></div>
<div class="t" style="left:24.7px;top:79.82px;font-size:13.8px;-webkit-text-stroke:0.25px currentColor;transform-origin:0 0;transform:scaleX(0.982);">Скорость кулера</div>
</div>
<div style="position:absolute;left:0px;top:0px;width:1687px;height:947px;border:1px solid #4a4a4a;"></div>
<div style="position:absolute;left:1531px;top:946px;width:107px;height:1px;background:#7e7e7e;"></div>
<div style="position:absolute;left:1638px;top:946px;width:49px;height:1px;background:#7b8595;"></div>
</body></html>
